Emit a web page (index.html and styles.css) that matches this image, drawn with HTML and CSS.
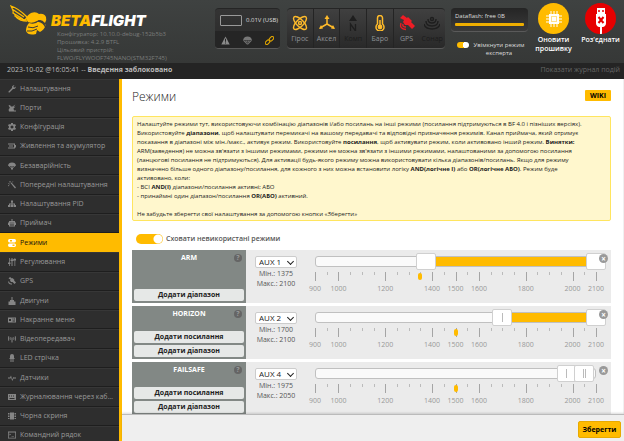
FILE: index.html
```html
<!DOCTYPE html>
<html lang="uk">
<head>
<meta charset="utf-8">
<title>Betaflight</title>
<link rel="stylesheet" href="styles.css">
</head>
<body>
<header class="top">
  <div class="brand">
    <svg class="bee" viewBox="0 0 40 32">
      <path d="M1 1 Q8 3 17 12 L15 15 Q9 14 5 11 Q6 10 3 8 Q4 7 1 1Z M3 8 L13 14 M2 4 L14 12" fill="none" stroke="#ffbb00" stroke-width="1.3"/>
      <path d="M6 12 Q10 16 17 16" fill="none" stroke="#ffbb00" stroke-width="1.3"/>
      <path d="M16 14 Q17 10 21 8 Q26 6 29 9 Q34 8 36 12 Q37 15 35 18 Q31 13 27 16 Q22 19 18 17Z" fill="#ffbb00"/>
      <path d="M19 18 Q25 20 29 16 Q33 18 36 20 Q34 25 30 27 L27 25 L26 29 Q18 31 16 26 Q16 21 19 18Z" fill="#ffbb00"/>
      <path d="M18 22 Q23 24 28 21 M17 26 Q22 27 27 24" fill="none" stroke="#3a3c3b" stroke-width="1"/>
      <path d="M28 16 Q34 17 36 23" fill="none" stroke="#3a3c3b" stroke-width="1.4"/>
    </svg>
    <div class="brand-text">
      <div class="wordmark"><span>BETA</span>FLIGHT</div>
      <div class="versions">Конфігуратор: 10.10.0-debug-152b5b3<br>Прошивка: 4.2.9 BTFL<br>Цільовий пристрій:<br>FLWO/FLYWOOF745NANO(STM32F745)</div>
    </div>
  </div>

  <div class="panel battery">
    <div class="volts"><span class="cell"></span>0.01V (USB)</div>
    <div class="flags">
      <svg viewBox="0 0 16 16"><path d="M8 1 L15.500 15 H.5Z" fill="#8a8a8a"/><path d="M8 5v5M8 11.500v2" stroke="#272727" stroke-width="1.800"/></svg>
      <svg viewBox="0 0 16 16"><path d="M0 8 Q1 1 8 1 Q15 1 16 8 L9 15 H7Z" fill="#777"/><path d="M4 8 L7 13 M12 8 L9 13 M8 8v5M1 8h14" stroke="#272727"/></svg>
      <svg viewBox="0 0 16 16" fill="none" stroke="#e0a500" stroke-width="2"><rect x="7" y="2.500" width="9" height="5.500" rx="2.700" transform="rotate(-45 11 5)"/><rect x="0" y="8" width="9" height="5.500" rx="2.700" transform="rotate(-45 5 11)"/></svg>
    </div>
  </div>

  <div class="panel sensors">
    <div class="sensor on"><svg viewBox="0 0 16 16" fill="none" stroke="#ffbb2a" stroke-width="1.400"><ellipse cx="8" cy="8" rx="8.500" ry="3.500" transform="rotate(45 8 8)"/><ellipse cx="8" cy="8" rx="8.500" ry="3.500" transform="rotate(-45 8 8)"/><circle cx="8" cy="8" r="1.500"/></svg><span>Гірос</span></div>
    <div class="sensor on"><svg viewBox="0 0 16 16" fill="none" stroke="#ffbb2a" stroke-width="1.500"><path d="M8 9V2M8 9L1 13M8 9L15 13"/><path d="M8 0L10.500 4H5.500ZM0 14L2 10L4 13.500ZM16 14L14 10L12 13.500Z" fill="#ffbb2a" stroke="none"/></svg><span>Аксел</span></div>
    <div class="sensor"><svg viewBox="0 0 16 16"><path d="M8 0L12 6H4Z" fill="#1e1e1e"/><path d="M5.500 16V9L10.500 16V9" fill="none" stroke="#1e1e1e" stroke-width="1.300"/></svg><span>Комп</span></div>
    <div class="sensor on"><svg viewBox="0 0 16 16"><path d="M5.500 9V3a2.500 2.500 0 0 1 5 0V9a4 4 0 1 1-5 0Z" fill="none" stroke="#ffbb2a" stroke-width="1.500"/><circle cx="8" cy="12" r="2.400" fill="#ffbb2a"/><path d="M8 5v7" stroke="#ffbb2a" stroke-width="1.500"/></svg><span>Баро</span></div>
    <div class="sensor on"><svg viewBox="0 0 16 16"><path d="M4 0L8 3L9 2L13 6L12 7L16 11L13 14L9 10L6 10L4 7L5 5L1 3Z" fill="#ee1c25"/><path d="M4 9Q3 12 7 12M2 8Q0 14 7 14.500" fill="none" stroke="#ee1c25" stroke-width="1.400"/></svg><span>GPS</span></div>
    <div class="sensor"><svg viewBox="0 0 16 16" fill="none" stroke="#1e1e1e" stroke-width="1.400"><circle cx="8" cy="4" r="1.500"/><path d="M4 4Q4 8 8 8T12 4M2 6Q2 11 8 11T14 6M0 9Q1 14 8 14T16 9"/></svg><span>Сонар</span></div>
  </div>

  <div class="storage">
    <div class="panel flash"><span>Dataflash: free 0B</span><div class="bar"></div></div>
    <label class="expert"><input type="checkbox" class="switch" checked><span>Увімкнути режим експерта</span></label>
  </div>

  <div class="actions">
    <button class="round"><span class="disc"><svg viewBox="0 0 16 16"><path d="M5 0v16M8 0v16M11 0v16M0 5h16M0 8h16M0 11h16" stroke="#fff"/><rect x="3" y="3" width="10" height="10" fill="#fff"/><rect x="5.500" y="5.500" width="5" height="5" fill="none" stroke="#ffe08a"/></svg></span>Оновити прошивку</button>
    <button class="round red"><span class="disc"><svg class="usb" viewBox="0 0 16 26"><path d="M4 0h8v6H4Z" fill="#fff"/><path d="M6 2v2M10 2v2" stroke="#e60000" stroke-width="1.500"/><path d="M3 6h10v9q0 3-3 4h-1v7H7v-7H6q-3-1-3-4Z" fill="#fff"/><path d="M5.500 9l5 6M10.500 9l-5 6" stroke="#e60000" stroke-width="2"/></svg></span>Роз'єднати</button>
  </div>
</header>

<div class="log"><span>2023-10-02 @16:05:41 -- <b>Введення заблоковано</b></span><a href="#log">Показати журнал подій</a></div>

<div class="main">
  <nav class="tabs">
    <a href="#"><svg viewBox="0 0 16 16"><path d="M1 13L8 6Q7 2 11 .5L13 1L10.500 3.500L12.500 5.500L15 3L15.500 5Q14 9 10 8L3 15Q0 15.500 1 13Z"/></svg><span>Налаштування</span></a>
    <a href="#"><svg viewBox="0 0 16 16"><path d="M1 3L4 2L6 5L9 5L15 1L11 6L15 5L11 9L12 13H16V15H2Q0 9 4 8Z"/></svg><span>Порти</span></a>
    <a href="#"><svg viewBox="0 0 16 16"><path fill-rule="evenodd" d="M6 0h4v2l2 1 2-1 2 3-2 2v2l2 2-2 3-2-1-2 1v2H6v-2l-2-1-2 1-2-3 2-2V7L0 5l2-3 2 1 2-1ZM8 5a3 3 0 1 0 .01 0Z"/></svg><span>Конфігурація</span></a>
    <a href="#"><svg viewBox="0 0 16 16"><path fill-rule="evenodd" d="M0 3h14v3h2v5h-2v2H0v-2h12V5H0ZM2 7h8v2H2Z"/></svg><span>Живлення та акумулятор</span></a>
    <a href="#"><svg viewBox="0 0 16 16"><path d="M0 7Q1 1 8 1T16 7L10 12V15H6V12ZM4 8L7 12V8ZM9 8V12L12 8Z" fill-rule="evenodd"/></svg><span>Безаварійність</span></a>
    <a href="#"><svg viewBox="0 0 16 16"><path d="M5 4L7 3L16 13L14 15ZM0 4h3v1H0ZM3 0h2v3H3ZM9 1L11 0L8 4ZM0 9L4 6L1 11Z"/></svg><span>Попередні налаштування</span></a>
    <a href="#"><svg viewBox="0 0 16 16"><path d="M6 1h4v4H9v2h5v3h2v4h-5v-4h1V9H9v1h1v4H6v-4h1V9H4v1h1v4H0v-4h2V7h5V5H6Z"/></svg><span>Налаштування PID</span></a>
    <a href="#"><svg viewBox="0 0 16 16"><path fill-rule="evenodd" d="M7 0h2v4h5v3h2v5h-2v3H2v-3H0V7h2V4h5ZM5 7v2h2V7ZM9 7v2h2V7ZM4 11v2h8v-2Z"/></svg><span>Приймач</span></a>
    <a href="#" class="active"><svg viewBox="0 0 16 16"><path fill-rule="evenodd" d="M3 0h10q3 0 3 3.500T13 7H3Q0 7 0 3.500T3 0ZM4 2v3h4V2ZM3 9h10q3 0 3 3.500T13 16H3q-3 0-3-3.500T3 9ZM9 11v3h4v-3Z"/></svg><span>Режими</span></a>
    <a href="#"><svg viewBox="0 0 16 16"><path d="M2 0h1.500v9H5v3H3.500v4H2v-4H0V9h2ZM7 0h2v3h2v3H9v10H7V6H5V3h2ZM13 0h1.500v2H16v3h-1.500v11H13V5h-2V2h2Z"/></svg><span>Регулювання</span></a>
    <a href="#"><svg viewBox="0 0 16 16"><path d="M4 0L8 3L9 2L13 6L12 7L16 11L13 14L9 10L6 10L4 7L5 5L1 3ZM2 9Q3 14 8 13V15Q1 16 0 9Z"/></svg><span>GPS</span></a>
    <a href="#"><svg viewBox="0 0 16 16"><path d="M7 0h2v6h3v3h3v7H1V9h3V6h3Z"/></svg><span>Двигуни</span></a>
    <a href="#"><svg viewBox="0 0 16 16"><path fill-rule="evenodd" d="M0 3h16v10H0ZM2 6v4h4V6ZM9 5v2h2V5ZM12 5v2h2V5ZM9 9v2h5V9Z"/></svg><span>Накранне меню</span></a>
    <a href="#"><svg viewBox="0 0 16 16"><path d="M1 2Q-1 7 1 12L2.500 11Q1 7 2.500 3ZM4 4Q2.500 7 4 10L5.500 9Q4.500 7 5.500 5ZM15 2Q17 7 15 12L13.500 11Q15 7 13.500 3ZM12 4Q13.500 7 12 10L10.500 9Q11.500 7 10.500 5ZM7 5h2v10H7Z"/></svg><span>Відеопередавач</span></a>
    <a href="#"><svg viewBox="0 0 16 16"><path d="M4 8V4q0-4 4-4t4 4v4h1v2h-2v6H9v-6H7v6H5v-6H3V8Z"/></svg><span>LED стрічка</span></a>
    <a href="#"><svg viewBox="0 0 16 16"><path d="M0 7h4L6 3L8.500 11L10.500 6L11.500 7H16V9H11L8.500 14L6 7L5 9H0Z"/></svg><span>Датчики</span></a>
    <a href="#"><svg viewBox="0 0 16 16"><path fill-rule="evenodd" d="M0 2h16v12H0ZM2 5v2h2V5ZM6 5v2h2V5ZM10 5v2h2V5ZM3 10v2h10v-2Z"/></svg><span>Журналювання через каб…</span></a>
    <a href="#"><svg viewBox="0 0 16 16"><path d="M4 1h8v14H4ZM0 2h3v3H0ZM0 7h3v3H0ZM0 12h3v2H0ZM13 2h3v3h-3ZM13 7h3v3h-3ZM13 12h3v2h-3Z"/></svg><span>Чорна скриня</span></a>
    <a href="#"><svg viewBox="0 0 16 16"><path fill-rule="evenodd" d="M0 1h16v14H0ZM1.500 3v10.500h13V3ZM3 5l3 2-3 2ZM7 10h5v1H7Z"/></svg><span>Командний рядок</span></a>
  </nav>

  <div class="page">
    <main class="content">
      <div class="heading"><h1>Режими</h1><a class="wiki" href="#wiki">WIKI</a></div>
      <p class="note">Налаштуйте режими тут, використовуючи комбінацію діапазонів і/або посилань на інші режими (посилання підтримуються в BF 4.0 і пізніших версіях).<br>Використовуйте <b>діапазони</b>, щоб налаштувати перемикачі на вашому передавачі та відповідні призначення режимів. Канал приймача, який отримує<br>показання в діапазоні між мін./макс., активує режим. Використовуйте <b>посилання</b>, щоб активувати режим, коли активовано інший режим. <b>Винятки:</b><br>ARM(заведення) не можна зв'язати з іншими режимами, режими не можна зв'язати з іншими режимами, налаштованими за допомогою посилання<br>(ланцюгові посилання не підтримуються). Для активації будь-якого режиму можна використовувати кілька діапазонів/посилань. Якщо для режиму<br>визначено більше одного діапазону/посилання, для кожного з них можна встановити логіку <b>AND(логічне І)</b> або <b>OR(логічне АБО)</b>. Режим буде<br>активовано, коли:<br>- ВСІ <b>AND(І)</b> діапазони/посилання активні; АБО<br>- принаймні один діапазон/посилання <b>OR(АБО)</b> активний.<br><br>Не забудьте зберегти свої налаштування за допомогою кнопки «Зберегти»</p>
      <label class="hide-unused"><input type="checkbox" class="switch big" checked><span>Сховати невикористані режими</span></label>

      <section class="mode">
        <div class="name"><h2>ARM</h2><button class="help" aria-label="Довідка">?</button><button class="add">Додати діапазон</button></div>
        <div class="channel"><div class="picker"><select aria-label="Канал ARM"><option>AUX 1</option></select></div><span>Мін.: 1375</span><span>Макс.: 2100</span></div>
        <div class="range" data-low="1375" data-high="2100" data-now="1350" data-grips="0,0"></div>
        <button class="close" aria-label="Видалити">×</button>
      </section>
      <section class="mode">
        <div class="name"><h2>HORIZON</h2><button class="help" aria-label="Довідка">?</button><button class="add">Додати посилання</button><button class="add">Додати діапазон</button></div>
        <div class="channel"><div class="picker"><select aria-label="Канал HORIZON"><option>AUX 2</option></select></div><span>Мін.: 1700</span><span>Макс.: 2100</span></div>
        <div class="range" data-low="1700" data-high="2100" data-now="1500" data-grips="1,0"></div>
        <button class="close" aria-label="Видалити">×</button>
      </section>
      <section class="mode">
        <div class="name"><h2>FAILSAFE</h2><button class="help" aria-label="Довідка">?</button><button class="add">Додати посилання</button><button class="add">Додати діапазон</button></div>
        <div class="channel"><div class="picker"><select aria-label="Канал FAILSAFE"><option>AUX 4</option></select></div><span>Мін.: 1975</span><span>Макс.: 2050</span></div>
        <div class="range" data-low="1975" data-high="2050" data-now="1500" data-grips="1,2"></div>
        <button class="close" aria-label="Видалити">×</button>
      </section>
    </main>
    <footer class="toolbar"><button class="save">Зберегти</button></footer>
  </div>
</div>
<script src="script.js"></script>
</body>
</html>
```

FILE: styles.css
```css
* { box-sizing: border-box; }
html, body { height: 100%; }
body {
  margin: 0;
  display: flex;
  flex-direction: column;
  overflow: hidden;
  font: 7px/9px "Open Sans", "Liberation Sans", sans-serif;
  color: #222;
  background: #fff;
}
button { font: inherit; border: 0; padding: 0; margin: 0; background: none; color: inherit; }
a { color: inherit; text-decoration: none; }
svg { display: block; }

/* Header */
.top {
  display: flex;
  align-items: flex-start;
  flex: none;
  height: 63px;
  padding: 0 0 0 10px;
  background: linear-gradient(#3f4241, #363837);
  color: #ddd;
}
.brand { flex: 1; display: flex; min-width: 0; padding-top: 5px; }
.bee { width: 40px; height: 32px; flex: none; }
.brand-text { padding: 7px 0 0 1px; white-space: nowrap; }
.wordmark { font: italic 900 15px/18px Inter, "Open Sans", sans-serif; color: #fff; }
.wordmark span { color: #ffbb00; }
.versions { padding-left: 6px; font-size: 6px; line-height: 8px; color: #7a7c7b; }
.panel {
  background: linear-gradient(#2d2d2d, #262626);
  border-top: 1px solid #252525;
  border-bottom: 1px solid #5a5a5a;
  border-radius: 4px;
  margin-top: 8px;
}
.battery { width: 65px; height: 41px; margin-right: 7px; overflow: hidden; background: linear-gradient(#343434, #2a2a2a); }
.volts { display: flex; align-items: center; gap: 4px; height: 22px; padding-left: 5px; white-space: nowrap; font-size: 6px; }
.cell { width: 22px; height: 11px; border: 1px solid #999; border-radius: 1px; }
.flags { display: flex; justify-content: space-between; align-items: center; height: 18px; padding: 0 6px; background: #252525; }
.flags svg { width: 9px; height: 9px; }
.sensors { display: flex; width: 158px; height: 41px; margin-right: 6px; background: linear-gradient(#404040, #292929); }
.sensor {
  flex: 1 1 0;
  min-width: 0;
  display: flex;
  flex-direction: column;
  align-items: center;
  gap: 3px;
  padding-top: 6px;
  border-right: 1px solid #242424;
  color: #1c1c1c;
}
.sensor:nth-child(n+5) { border-right: 0; }
.sensor svg { width: 16px; height: 16px; flex: none; }
.sensor.on { color: #8f9397; }
.sensor span { line-height: 10px; }
.storage { width: 77px; margin-right: 2px; }
.flash { height: 24px; padding: 3px 4px; background: linear-gradient(#262626, #3a3a3a); font-size: 6px; line-height: 8px; }
.bar { height: 3px; margin-top: 3px; border-radius: 1px; background: #eeae00; }
.expert { display: flex; gap: 3px; padding: 9px 2px 0 6px; line-height: 8px; font-size: 6px; text-align: center; }
.switch {
  appearance: none;
  flex: none;
  width: 12px;
  height: 6px;
  margin: 1px 0 0;
  border-radius: 3px;
  background: radial-gradient(circle at 9px 3px, #fff 3px, #ffbb00 3px);
}
.switch.big { width: 27px; height: 10px; margin: 0; border-radius: 5px; background: radial-gradient(circle at 22px 5px, #fff 4px, #ffbb00 5px); }
.actions { display: flex; }
.round { width: 47px; padding-top: 3px; display: flex; flex-direction: column; align-items: center; gap: 1px; font-weight: 600; line-height: 9px; color: #fff; }
.disc { display: flex; align-items: center; justify-content: center; width: 31px; height: 31px; border-radius: 50%; background: #ffbb00; overflow: hidden; }
.red .disc { background: #e60000; align-items: flex-end; }
.disc svg { width: 16px; height: 16px; }
.disc .usb { height: 26px; }

.log { flex: none; display: flex; justify-content: space-between; height: 16px; padding: 0 4px 0 7px; line-height: 14px; background: #242424; color: #bbb; }
.log a { color: #666; }

/* Sidebar */
.main { flex: 1; min-height: 0; display: flex; }
.tabs { flex: none; width: 122px; display: flex; flex-direction: column; height: calc(100% + 4px); background: #2e2e2e; border-right: 3px solid #ffbb00; }
.tabs a {
  flex: 1 1 0;
  min-height: 0;
  display: flex;
  align-items: center;
  gap: 4px;
  padding: 0 2px 0 8px;
  border-bottom: 1px solid #1e1e1e;
  border-top: 1px solid #373737;
  color: #999;
}
.tabs svg { width: 8px; height: 8px; flex: none; fill: #858585; }
.tabs span { white-space: nowrap; line-height: 12px; }
.tabs .active { background: #ffbb00; border-color: #ffbb00; color: #111; }
.tabs .active svg { fill: #fff; }

/* Content */
.page { flex: 1; min-width: 0; display: flex; flex-direction: column; }
.content { flex: 1; min-height: 0; overflow: hidden; padding: 9px 12px 0 10px; border-right: 1px solid #f0f0f0; }
.heading { display: flex; justify-content: space-between; align-items: flex-start; height: 28px; }
h1 { margin: 0; font-size: 12px; line-height: 18px; font-weight: 300; color: #222; }
.wiki { margin-top: 2px; width: 26px; line-height: 11px; text-align: center; font-weight: 700; background: #ffbb00; color: #000; border-radius: 1px; }
.note { margin: 0; padding: 3px 4px; height: 105px; background: #fff7cd; border: 1px solid #ffe55f; border-radius: 2px; white-space: nowrap; font-size: 6px; line-height: 9px; color: #222; }
.hide-unused { display: flex; align-items: center; gap: 3px; height: 29px; padding: 6px 0 0 4px; font-weight: 600; color: #555; }
.mode { display: flex; position: relative; height: 53px; margin-bottom: 3px; background: #ebebeb; }
.name { position: relative; flex: none; width: 114px; padding: 2px; display: flex; flex-direction: column; gap: 2px; background: #828885; }
h2 { margin: 0 0 auto; font-size: 7px; line-height: 12px; font-weight: 700; text-align: center; color: #fff; }
.help { position: absolute; top: 4px; right: 4px; width: 8px; height: 8px; border-radius: 50%; background: #656565; color: #999; line-height: 8px; font-weight: 700; }
.add { height: 12px; line-height: 12px; border-radius: 2px; background: #e6e8e7; color: #222; font-weight: 700; }
.channel { flex: none; width: 60px; padding: 6px 0 0; display: flex; flex-direction: column; align-items: center; line-height: 10px; color: #555; }
.picker { position: relative; display: flex; margin-bottom: 1px; }
.picker::after {
  content: "";
  position: absolute;
  top: 3px;
  right: 4px;
  width: 4px;
  height: 4px;
  border: solid #222;
  border-width: 0 1px 1px 0;
  transform: rotate(45deg);
  pointer-events: none;
}
select { appearance: none; width: 42px; height: 12px; margin: 0; padding: 0 0 0 3px; border: 1px solid #ccc; border-radius: 2px; background: #fff; font: 8px/10px "Open Sans", sans-serif; color: #222; }
.range { flex: 1; position: relative; margin: 6px 15px 0 9px; }
.track { height: 11px; border: 1px solid #c0c0c0; border-radius: 3px; background: #fafafa; overflow: hidden; position: relative; }
.fill { position: absolute; top: 0; bottom: 0; background: #ffbb00; }
.range input {
  appearance: none;
  position: absolute;
  top: -3px;
  left: -10px;
  width: calc(100% + 20px);
  height: 17px;
  margin: 0;
  background: none;
  pointer-events: none;
}
.range input::-webkit-slider-thumb {
  appearance: none;
  width: 20px;
  height: 17px;
  border: 1px solid #d0d0d0;
  border-radius: 2px;
  background: #fff;
  pointer-events: auto;
}
.range .grip-1::-webkit-slider-thumb { background: linear-gradient(#bbb, #bbb) center / 1px 9px no-repeat #fff; }
.range .grip-2::-webkit-slider-thumb { background: linear-gradient(90deg, #bbb 1px, transparent 1px 2px, #bbb 2px) center / 3px 9px no-repeat #fff; }
.scale { position: relative; height: 26px; margin-top: 5px; }
.tick { position: absolute; top: 0; width: 1px; height: 3px; background: #bbb; }
.tick.large { height: 9px; background: #a5a5a5; }
.value { position: absolute; top: 12px; width: 20px; margin-left: -10px; text-align: center; line-height: 9px; color: #999; }
.now { position: absolute; top: 1px; width: 4px; height: 7px; margin-left: -2px; border-radius: 2px; background: #ffbb00; }
.close { position: absolute; top: 4px; right: 3px; width: 9px; height: 9px; border-radius: 50%; background: #999; color: #fff; font-size: 8px; line-height: 8px; font-weight: 700; }

.toolbar { position: relative; flex: none; height: 27px; padding: 6px 3px 0 0; display: flex; justify-content: flex-end; align-items: flex-start; background: #efefef; border-top: 1px solid #bbb; box-shadow: 0 -1px 2px rgba(0, 0, 0, .15); }
.save { width: 43px; height: 17px; border: 1px solid #e8aa00; border-radius: 2px; background: #ffbb00; color: #000; font-weight: 700; }
```

FILE: script.js
```js
const MIN = 900, MAX = 2100;
const labelled = [900, 1000, 1200, 1400, 1500, 1600, 1800, 2000, 2100];
const percent = v => (v - MIN) / (MAX - MIN) * 100;

document.querySelectorAll('.range').forEach(range => {
  const { low, high, now, grips } = range.dataset;
  const [g1, g2] = grips.split(',');
  let scale = '';
  for (let v = MIN; v <= MAX; v += 50) {
    const large = labelled.includes(v);
    scale += `<span class="tick${large ? ' large' : ''}" style="left:${percent(v)}%"></span>`;
    if (large) scale += `<span class="value" style="left:${percent(v)}%">${v}</span>`;
  }
  range.innerHTML = `
    <div class="track"><div class="fill" style="left:${percent(low)}%;right:${100 - percent(high)}%"></div></div>
    <input type="range" aria-label="Мінімум" class="grip-${g1}" min="${MIN}" max="${MAX}" value="${low}">
    <input type="range" aria-label="Максимум" class="grip-${g2}" min="${MIN}" max="${MAX}" value="${high}">
    <div class="scale">${scale}<span class="now" style="left:${percent(now)}%"></span></div>`;
});
```
